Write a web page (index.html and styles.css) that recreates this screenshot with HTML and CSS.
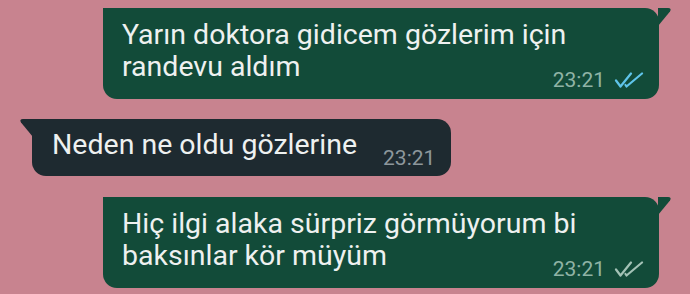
FILE: index.html
```html
<!DOCTYPE html>
<html lang="tr">
<head>
<meta charset="utf-8">
<link rel="stylesheet" href="styles.css">
</head>
<body>
<div class="chat">
  <div class="bubble out">
    <p class="text">Yarın doktora gidicem gözlerim için<br>randevu aldım</p>
    <div class="meta"><span class="time">23:21</span>
      <svg class="ticks read" viewBox="0 0 30 16" width="30" height="16"><path d="M2 8.5 L6.5 14.5 L17 1.5 M11.5 13 L12.5 14.5 L28 1.5" fill="none" stroke="currentColor" stroke-width="2.2" stroke-linecap="round" stroke-linejoin="round"/></svg>
    </div>
    <svg class="tail tail-out" viewBox="0 0 14 18" width="14" height="18"><path d="M0 0 H10 Q14 0 12 3.5 L0 18 Z"/></svg>
  </div>
  <div class="bubble in">
    <p class="text">Neden ne oldu gözlerine</p>
    <span class="time">23:21</span>
    <svg class="tail tail-in" viewBox="0 0 14 18" width="14" height="18"><path d="M14 0 H4 Q0 0 2 3.5 L14 18 Z"/></svg>
  </div>
  <div class="bubble out">
    <p class="text">Hiç ilgi alaka sürpriz görmüyorum bi<br>baksınlar kör müyüm</p>
    <div class="meta"><span class="time">23:21</span>
      <svg class="ticks" viewBox="0 0 30 16" width="30" height="16"><path d="M2 8.5 L6.5 14.5 L17 1.5 M11.5 13 L12.5 14.5 L28 1.5" fill="none" stroke="currentColor" stroke-width="2.2" stroke-linecap="round" stroke-linejoin="round"/></svg>
    </div>
    <svg class="tail tail-out" viewBox="0 0 14 18" width="14" height="18"><path d="M0 0 H10 Q14 0 12 3.5 L0 18 Z"/></svg>
  </div>
</div>
</body>
</html>
```

FILE: styles.css
```css
html, body {
  margin: 0;
  padding: 0;
}
body {
  background: #c8838f;
  width: 690px;
  height: 294px;
  overflow: hidden;
  font-family: Roboto, "Noto Sans", sans-serif;
}
.chat {
  display: flex;
  flex-direction: column;
  padding-top: 8px;
}
.bubble {
  position: relative;
  color: #eef1f0;
}
.text {
  margin: 0;
  font-size: 28.5px;
  line-height: 32px;
  white-space: nowrap;
}
.time {
  font-size: 21px;
  line-height: 22px;
}
.out {
  align-self: flex-end;
  margin-right: 31px;
  width: 556px;
  box-sizing: border-box;
  background: #124b39;
  border-radius: 0 14px 14px 14px;
  padding: 11px 15px 8px 19px;
  display: flex;
  flex-direction: column;
}
.out .meta {
  align-self: flex-end;
  display: flex;
  align-items: center;
  gap: 9px;
  margin-top: -14px;
  color: #8fb3a5;
}
.ticks {
  color: #a3c2b6;
}
.ticks.read {
  color: #5fc4ea;
}
.in {
  align-self: flex-start;
  margin: 20px 0 21px 32px;
  background: #1e2a30;
  border-radius: 0 14px 14px 14px;
  padding: 10px 16px 15px 20px;
  display: flex;
  align-items: flex-end;
  gap: 26px;
}
.in .time {
  color: #8d979c;
  margin-bottom: -8px;
}
.tail {
  position: absolute;
  top: 0;
}
.tail-out {
  right: -13px;
  fill: #124b39;
}
.tail-in {
  left: -13px;
  fill: #1e2a30;
}
```
